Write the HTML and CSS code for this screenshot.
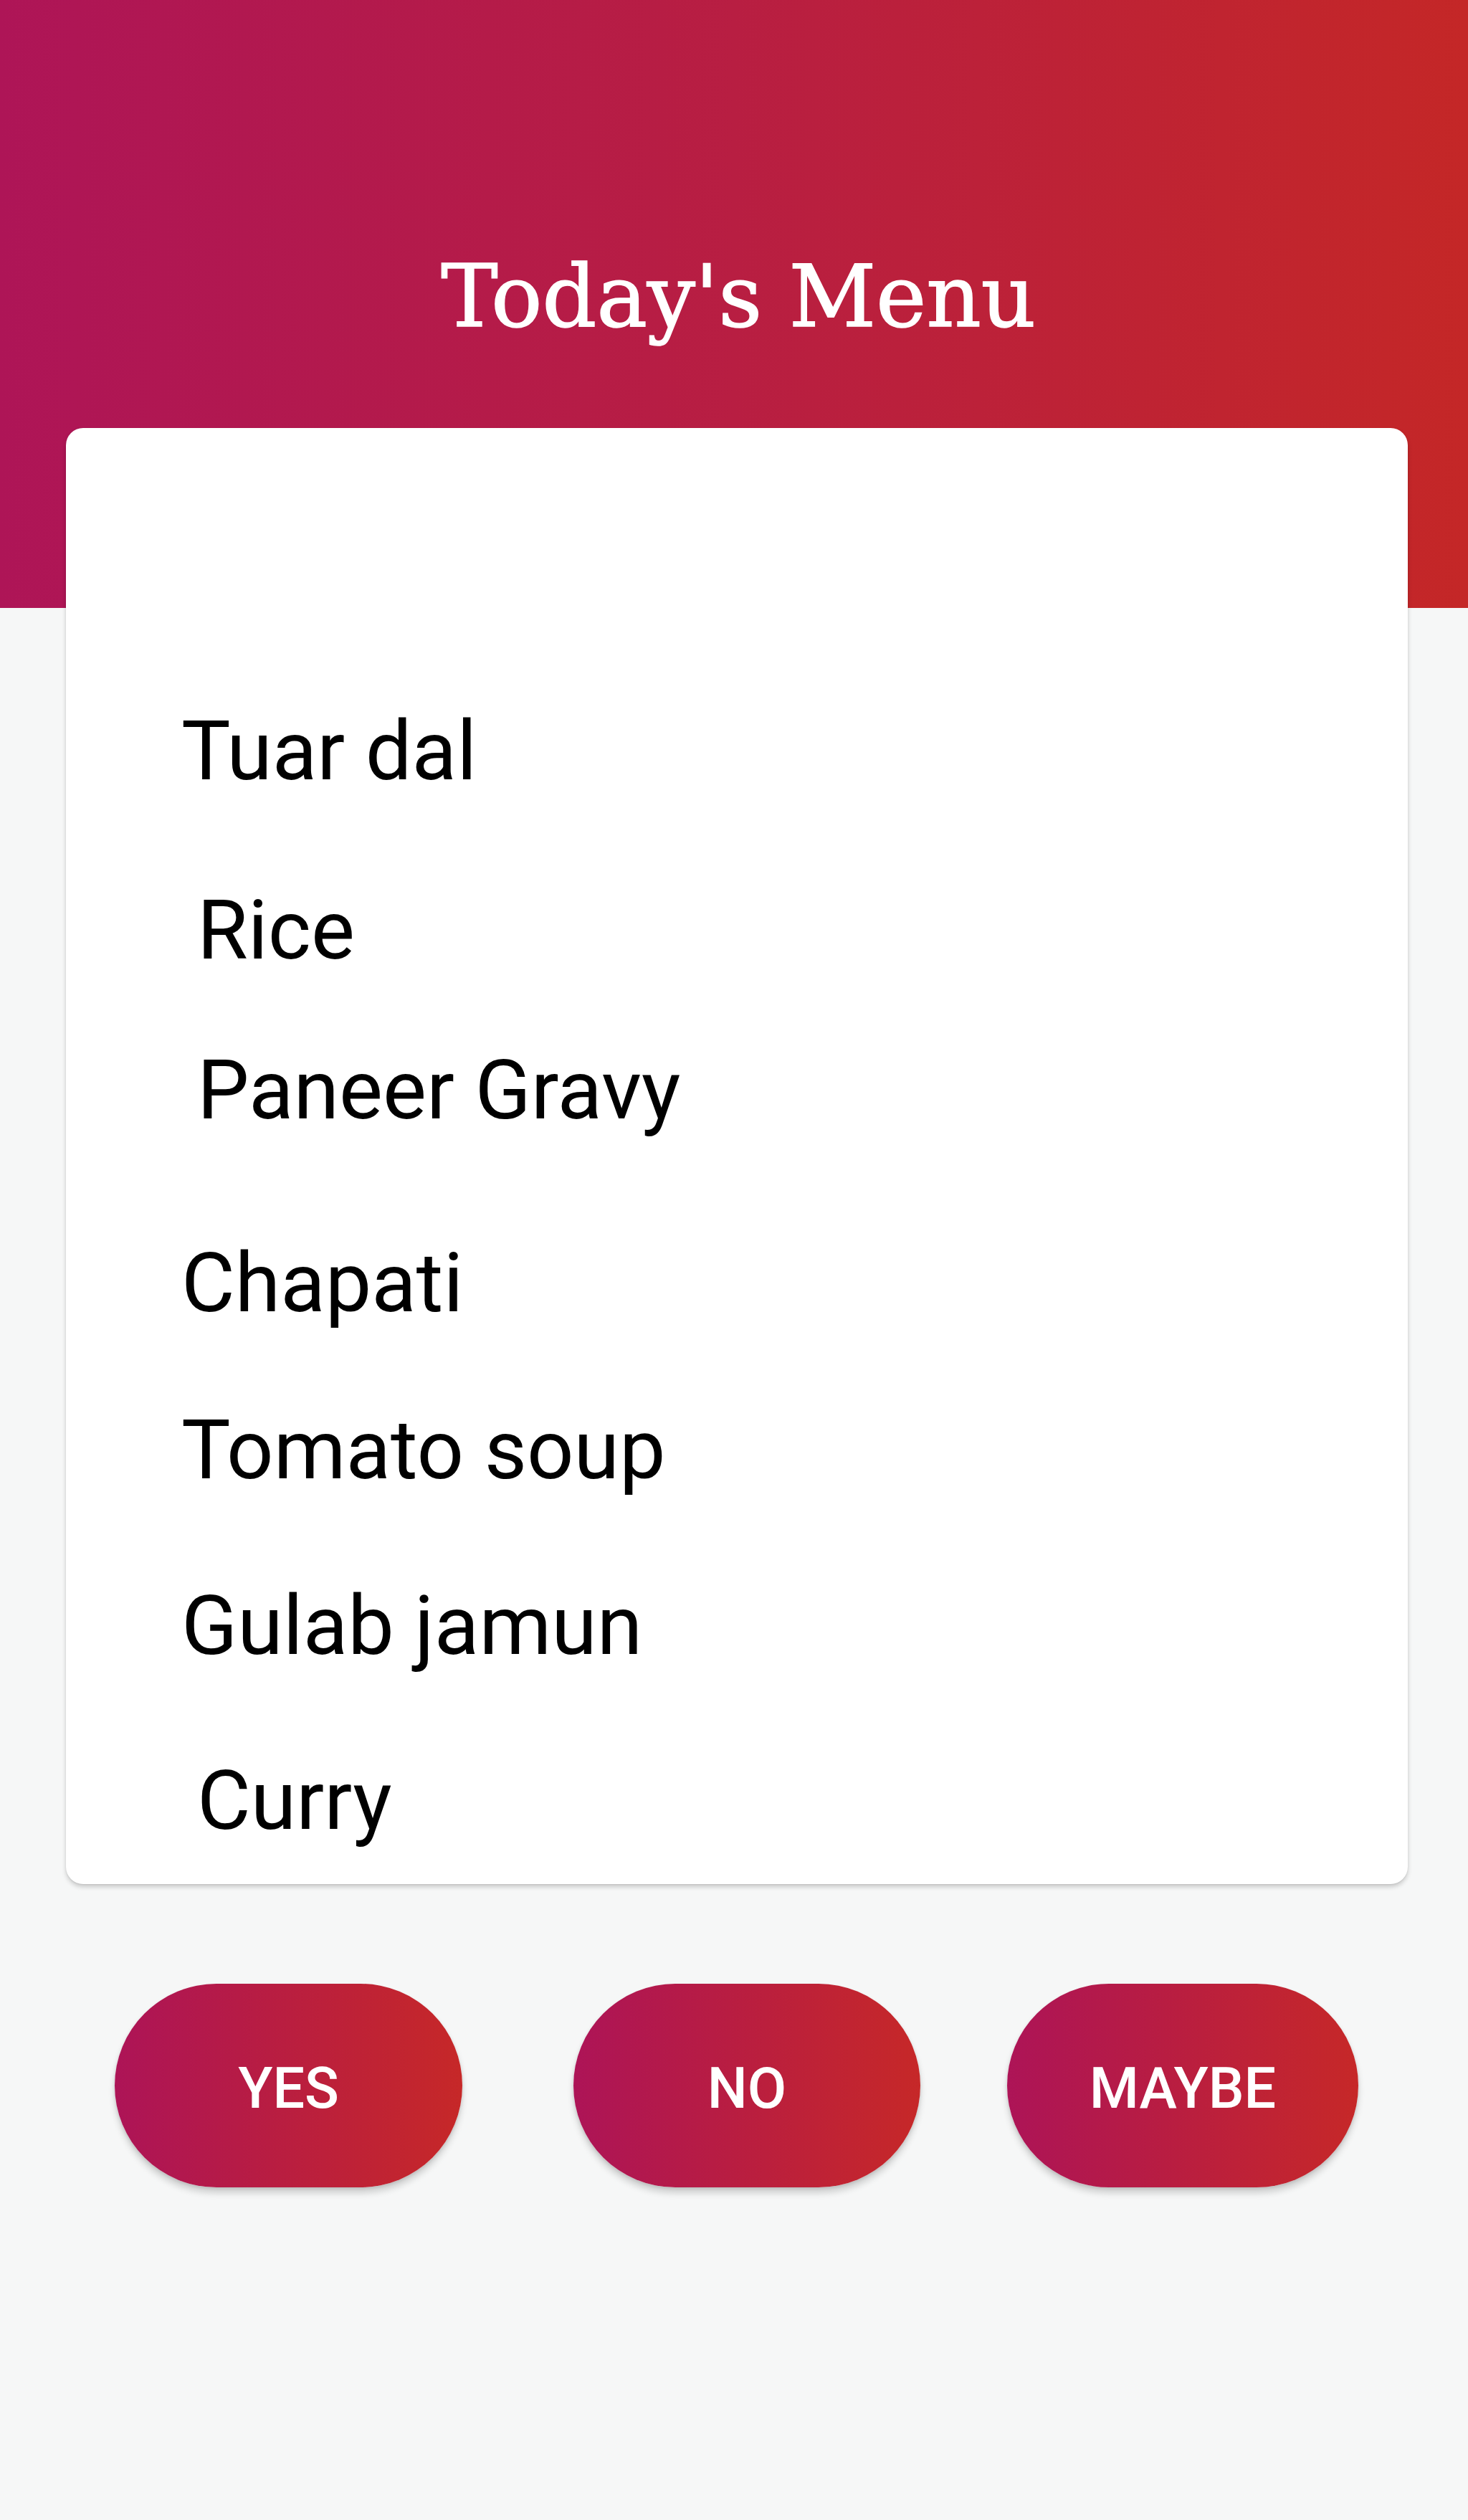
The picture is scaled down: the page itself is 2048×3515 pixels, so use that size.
FILE: index.html
```html
<!DOCTYPE html>
<html lang="en">
<head>
<meta charset="utf-8">
<title>Today's Menu</title>
<link rel="stylesheet" href="styles.css">
</head>
<body>
<div class="page">
  <header class="hero">
    <h1 class="title">Today's Menu</h1>
  </header>
  <section class="card">
    <ul class="menu">
      <li class="item">Tuar dal</li>
      <li class="item indent gap-rice">Rice</li>
      <li class="item indent gap-paneer">Paneer Gravy</li>
      <li class="item gap-chapati">Chapati</li>
      <li class="item gap-tomato">Tomato soup</li>
      <li class="item gap-gulab">Gulab jamun</li>
      <li class="item indent gap-curry">Curry</li>
    </ul>
  </section>
  <div class="actions">
    <button class="btn btn-yes">YES</button>
    <button class="btn btn-no">NO</button>
    <button class="btn btn-maybe">MAYBE</button>
  </div>
</div>
</body>
</html>
```

FILE: styles.css
```css
html, body {
  margin: 0;
  padding: 0;
}
body {
  background: #f6f7f7;
  font-family: Roboto, "Liberation Sans", Arial, sans-serif;
}
.page {
  width: 2048px;
  min-height: 3515px;
  background: #f6f7f7;
}
.hero {
  height: 848px;
  background: linear-gradient(to right, #ae1557, #b81e42 50%, #c42727);
  display: flex;
  justify-content: center;
  box-sizing: border-box;
  padding: 344px 0 0 12px;
}
.title {
  margin: 0;
  color: #ffffff;
  font-family: "DejaVu Serif", Georgia, serif;
  font-weight: normal;
  font-size: 119px;
  line-height: 140px;
  letter-spacing: -0.3px;
  height: 140px;
  -webkit-text-stroke: 1.5px #ffffff;
}
.card {
  margin: -251px 84px 0 92px;
  background: #ffffff;
  border-radius: 24px;
  box-shadow: 0 4px 6px rgba(0,0,0,0.18), 0 1px 2px rgba(0,0,0,0.08);
  padding: 384px 0 49px 161px;
  position: relative;
}
.menu {
  list-style: none;
  margin: 0;
  padding: 0;
}
.item {
  font-size: 115px;
  line-height: 134px;
  color: #000000;
}
.indent { padding-left: 22px; }
.gap-rice { margin-top: 116px; }
.gap-paneer { margin-top: 89px; }
.gap-chapati { margin-top: 135px; }
.gap-tomato { margin-top: 99px; }
.gap-gulab { margin-top: 111px; }
.gap-curry { margin-top: 110px; }
.actions {
  display: flex;
  padding: 139px 0 0 160px;
}
.btn {
  height: 284px;
  border: none;
  border-radius: 142px;
  background: linear-gradient(to right, #ad1457, #c62828);
  color: #ffffff;
  font-family: Roboto, "Liberation Sans", Arial, sans-serif;
  font-weight: 500;
  font-size: 79px;
  padding: 8px 0 0 0;
  box-shadow: 0 8px 10px rgba(0,0,0,0.16), 0 2px 4px rgba(0,0,0,0.1);
}
.btn-yes { width: 485px; }
.btn-no { width: 484px; margin-left: 155px; }
.btn-maybe { width: 490px; margin-left: 121px; }
```
